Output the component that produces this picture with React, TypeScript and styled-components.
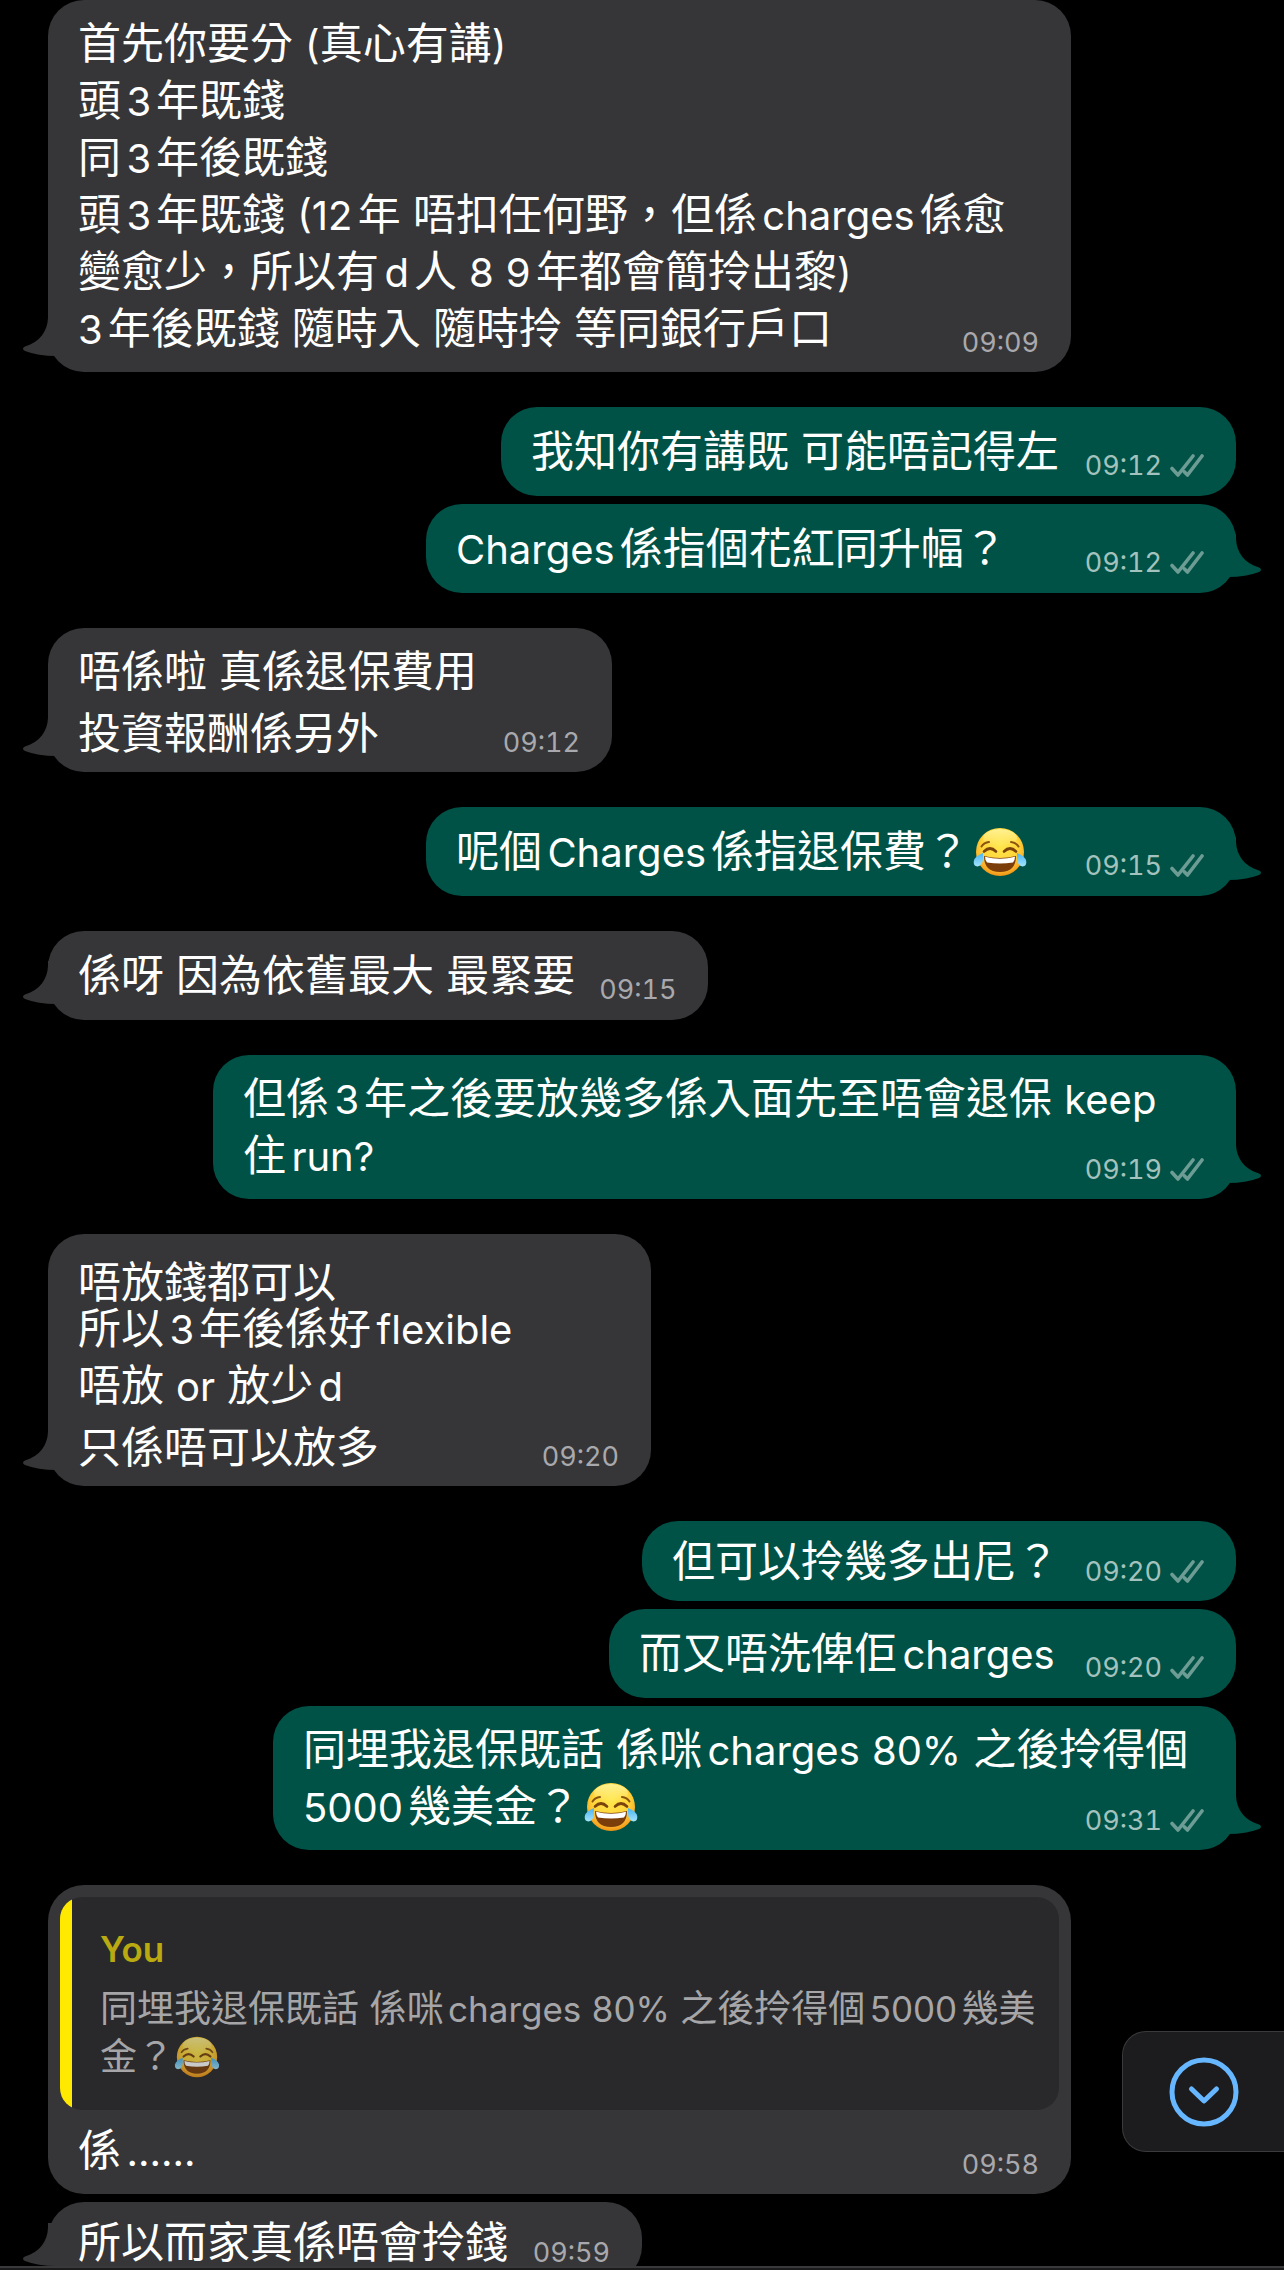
import React from "react";
import styled, { createGlobalStyle, css } from "styled-components";

const GlobalStyle = createGlobalStyle`
  *, *::before, *::after { box-sizing: border-box; }
  body {
    margin: 0;
    background: #000;
    color: #fff;
    font-family: Inter, "Noto Sans CJK TC", sans-serif;
    font-size: 43px;
    text-autospace: normal;
  }
`;

const INCOMING = "#363638";
const OUTGOING = "#005246";

type Side = "in" | "out";
type LineKind = "mixed" | "compact" | "low";

const Shell = styled.div`
  height: 100vh;
  display: flex;
  flex-direction: column;
`;

const Thread = styled.main`
  flex: 1;
  min-height: 0;
  overflow: hidden;
  padding: 0 48px;
  display: flex;
  flex-direction: column;
  gap: 35px;
`;

const Group = styled.section<{ $side: Side }>`
  flex: none;
  display: flex;
  flex-direction: column;
  gap: 8px;
  align-items: ${(p) => (p.$side === "in" ? "flex-start" : "flex-end")};
`;

const Bubble = styled.article<{ $side: Side; $minWidth: number; $single: boolean; $quoted: boolean }>`
  position: relative;
  display: flex;
  flex-direction: column;
  justify-content: center;
  max-width: 1023px;
  min-width: min(100%, ${(p) => p.$minWidth}px);
  min-height: ${(p) => (p.$single ? 89 : 80)}px;
  padding: ${(p) => (p.$quoted ? "12px 12px 15px" : "15px 32px 15px 30px")};
  border-radius: 36px;
  background: ${(p) => (p.$side === "in" ? INCOMING : OUTGOING)};
`;

const Tail = styled.svg<{ $side: Side }>`
  position: absolute;
  bottom: 14px;
  width: 40px;
  height: 45px;
  color: ${(p) => (p.$side === "in" ? INCOMING : OUTGOING)};
  ${(p) => (p.$side === "in" ? css`left: -26px; transform: scaleX(-1);` : css`right: -26px;`)}
`;

const Line = styled.p<{ $kind: LineKind }>`
  margin: 0;
  line-height: ${(p) => ({ mixed: 57, compact: 50, low: 36 })[p.$kind]}px;
  padding-top: ${(p) => (p.$kind === "low" ? 15 : 0)}px;
`;

const Latin = styled.span`
  font-size: 40px;
  line-height: 1;
`;

const LastRow = styled.div<{ $kind: LineKind; $inset: boolean }>`
  display: flex;
  justify-content: space-between;
  align-items: flex-end;
  gap: 24px;
  ${(p) => p.$kind === "low" && css`${Line} { padding-bottom: 6px; }`}
  ${(p) => p.$inset && css`padding: 12px 20px 0 18px;`}
`;

const Meta = styled.span<{ $side: Side }>`
  flex: none;
  display: flex;
  align-items: center;
  gap: 8px;
  font-size: 27px;
  line-height: 28px;
  font-variant-numeric: tabular-nums;
  color: ${(p) => (p.$side === "in" ? "#a9a9ad" : "#a3c2bd")};
`;

const Ticks = styled.svg`
  width: 34px;
  height: 24px;
  color: #6d9c94;
`;

const Face = styled.svg<{ $small?: boolean }>`
  width: ${(p) => (p.$small ? 46 : 54)}px;
  height: ${(p) => (p.$small ? 42 : 50)}px;
  margin-left: ${(p) => (p.$small ? 0 : 4)}px;
  vertical-align: ${(p) => (p.$small ? "-8px" : "-10px")};
`;

const Quote = styled.blockquote`
  margin: 0;
  padding: 28px 20px 29px 40px;
  border-radius: 22px;
  background: linear-gradient(to right, #ffe900 12px, #29292b 12px);
  font-size: 37px;
  line-height: 48px;
  color: #a6a6a9;
  p { margin: 12px 0 0; }
  svg { opacity: 0.75; }
  ${Latin} { font-size: 35px; }
`;

const Author = styled.cite`
  display: block;
  font-style: normal;
  font-weight: 600;
  font-size: 35px;
  color: #b9aa12;
`;

const Composer = styled.footer`
  flex: none;
  height: 4px;
  border-top: 2px solid #39393b;
  background: #1b1b1c;
`;

const JumpButton = styled.button`
  position: fixed;
  right: 0;
  bottom: 118px;
  width: 162px;
  height: 121px;
  padding: 0;
  display: flex;
  align-items: center;
  justify-content: center;
  border: 1px solid #3a3a3c;
  border-right: 0;
  border-radius: 24px 0 0 24px;
  background: #1c1c1e;
  color: #66b7ff;
`;

function JoyFace({ small }: { small?: boolean }) {
  return (
    <Face $small={small} viewBox="0 0 54 50" role="img" aria-label="😂">
      <defs>
        <radialGradient id="skin" cx="0.5" cy="0.35" r="0.68">
          <stop offset="0" stopColor="#ffe84f" />
          <stop offset="0.55" stopColor="#ffd53a" />
          <stop offset="0.85" stopColor="#f9aa24" />
          <stop offset="1" stopColor="#e98a10" />
        </radialGradient>
        <linearGradient id="shine" x1="0" y1="0" x2="0" y2="1">
          <stop offset="0" stopColor="#fff9a8" stopOpacity="0.8" />
          <stop offset="1" stopColor="#fff9a8" stopOpacity="0" />
        </linearGradient>
        <linearGradient id="tear" x1="0" y1="0" x2="0" y2="1">
          <stop offset="0" stopColor="#49b4f3" />
          <stop offset="1" stopColor="#a4e4fb" />
        </linearGradient>
      </defs>
      <circle cx="27" cy="25" r="24" fill="url(#skin)" />
      <ellipse cx="27" cy="11" rx="17" ry="9" fill="url(#shine)" />
      <path d="M8.500 19.500Q11 15.500 16 15M45.500 19.500Q43 15.500 38 15" fill="none" stroke="#8a5410" strokeWidth="2" strokeLinecap="round" />
      <path d="M11 24.500Q17 18.500 23 24.500M31 24.500Q37 18.500 43 24.500" fill="none" stroke="#7a430b" strokeWidth="2.600" strokeLinecap="round" />
      <path d="M11 29Q27 33 43 29Q43 45 27 45T11 29Z" fill="#7b3d0a" />
      <path d="M12 29.800Q27 33.500 42 29.800Q42 33.500 40 35.500Q27 37.500 14 35.500Q12 33.500 12 29.800Z" fill="#fff" />
      <path d="M10 26Q2 29 0.800 34Q0 39 4.500 39.500Q9.500 39 10 32Z" fill="url(#tear)" />
      <path d="M44 26Q52 29 53.200 34Q54 39 49.500 39.500Q44.500 39 44 32Z" fill="url(#tear)" />
    </Face>
  );
}

type Message = {
  side: Side;
  time: string;
  lines: { kind?: LineKind; text: string }[];
  minWidth?: number;
  tail?: boolean;
  quote?: string;
};

// Latin runs are set slightly smaller than the ideographs around them.
const RUNS = /([A-Za-z0-9%?.()]+|😂)/u;

function RichText({ text, small }: { text: string; small?: boolean }) {
  return (
    <>
      {text.split(RUNS).map((run, i) => {
        if (run === "😂") return <JoyFace key={i} small={small} />;
        return i % 2 ? <Latin key={i}>{run}</Latin> : run;
      })}
    </>
  );
}

function MessageBubble({ side, time, lines, minWidth = 0, tail, quote }: Message) {
  const last = lines[lines.length - 1];
  const lastKind = last.kind ?? "mixed";
  return (
    <Bubble
      $side={side}
      $minWidth={minWidth}
      $single={lines.length === 1 && lastKind === "mixed"}
      $quoted={Boolean(quote)}
    >
      {tail && (
        <Tail $side={side} viewBox="0 0 40 45" aria-hidden="true">
          <path d="M0 0H14V5C14.500 18 22 29 37 33.500Q41 35.500 37 38Q24 43 6 43L0 40Z" fill="currentColor" />
        </Tail>
      )}
      {quote && (
        <Quote>
          <Author>You</Author>
          <p>
            <RichText text={quote} small />
          </p>
        </Quote>
      )}
      {lines.slice(0, -1).map((line, i) => (
        <Line key={i} $kind={line.kind ?? "mixed"}>
          <RichText text={line.text} />
        </Line>
      ))}
      <LastRow $kind={lastKind} $inset={Boolean(quote)}>
        <Line $kind={lastKind}>
          <RichText text={last.text} />
        </Line>
        <Meta $side={side}>
          <time>{time}</time>
          {side === "out" && (
            <Ticks viewBox="0 0 34 24" role="img" aria-label="Delivered">
              <path
                d="M2 14.500L8 21L23 2M14.500 18L17.500 21L32 2"
                fill="none"
                stroke="currentColor"
                strokeWidth="3.600"
                strokeLinecap="round"
                strokeLinejoin="round"
              />
            </Ticks>
          )}
        </Meta>
      </LastRow>
    </Bubble>
  );
}

const groups: Message[][] = [
  [
    {
      side: "in",
      time: "09:09",
      minWidth: 1023,
      tail: true,
      lines: [
        { text: "首先你要分 (真心有講)" },
        { text: "頭3年既錢" },
        { text: "同3年後既錢" },
        { text: "頭3年既錢 (12年 唔扣任何野，但係charges係愈" },
        { text: "變愈少，所以有d人 8 9年都會簡拎出黎)" },
        { text: "3年後既錢 隨時入 隨時拎 等同銀行戶口" },
      ],
    },
  ],
  [
    { side: "out", time: "09:12", minWidth: 735, lines: [{ text: "我知你有講既 可能唔記得左" }] },
    { side: "out", time: "09:12", minWidth: 810, tail: true, lines: [{ text: "Charges係指個花紅同升幅？" }] },
  ],
  [
    {
      side: "in",
      time: "09:12",
      minWidth: 564,
      tail: true,
      lines: [{ text: "唔係啦 真係退保費用" }, { kind: "low", text: "投資報酬係另外" }],
    },
  ],
  [{ side: "out", time: "09:15", minWidth: 810, tail: true, lines: [{ text: "呢個Charges係指退保費？😂" }] }],
  [{ side: "in", time: "09:15", minWidth: 660, tail: true, lines: [{ text: "係呀 因為依舊最大 最緊要" }] }],
  [
    {
      side: "out",
      time: "09:19",
      minWidth: 1023,
      tail: true,
      lines: [{ text: "但係3年之後要放幾多係入面先至唔會退保 keep" }, { text: "住run?" }],
    },
  ],
  [
    {
      side: "in",
      time: "09:20",
      minWidth: 603,
      tail: true,
      lines: [
        { kind: "low", text: "唔放錢都可以" },
        { text: "所以3年後係好flexible" },
        { text: "唔放 or 放少d" },
        { kind: "low", text: "只係唔可以放多" },
      ],
    },
  ],
  [
    { side: "out", time: "09:20", minWidth: 594, lines: [{ kind: "compact", text: "但可以拎幾多出尼？" }] },
    { side: "out", time: "09:20", minWidth: 627, lines: [{ text: "而又唔洗俾佢charges" }] },
    {
      side: "out",
      time: "09:31",
      minWidth: 963,
      tail: true,
      lines: [{ text: "同埋我退保既話 係咪charges 80% 之後拎得個" }, { text: "5000幾美金？😂" }],
    },
  ],
  [
    {
      side: "in",
      time: "09:58",
      minWidth: 1023,
      quote: "同埋我退保既話 係咪charges 80% 之後拎得個5000幾美金？😂",
      lines: [{ text: "係......" }],
    },
    { side: "in", time: "09:59", minWidth: 594, tail: true, lines: [{ kind: "compact", text: "所以而家真係唔會拎錢" }] },
  ],
];

export default function App() {
  return (
    <Shell lang="zh-Hant">
      <GlobalStyle />
      <Thread>
        {groups.map((group, i) => (
          <Group key={i} $side={group[0].side}>
            {group.map((message, j) => (
              <MessageBubble key={j} {...message} />
            ))}
          </Group>
        ))}
      </Thread>
      <JumpButton type="button" aria-label="Scroll to latest message">
        <svg width="70" height="70" viewBox="0 0 70 70" fill="none" stroke="currentColor" strokeLinecap="round" strokeLinejoin="round" aria-hidden="true">
          <circle cx="35" cy="35" r="32" strokeWidth="5" />
          <path d="M22.500 32L35 44L47.500 32" strokeWidth="5" />
        </svg>
      </JumpButton>
      <Composer />
    </Shell>
  );
}
